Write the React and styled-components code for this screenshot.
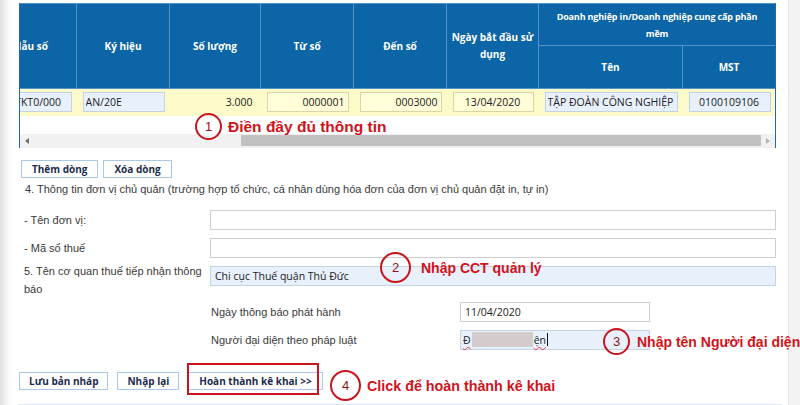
import React from 'react'
import styled, { createGlobalStyle, css } from 'styled-components'

const Global = createGlobalStyle`
  html, body { margin: 0; padding: 0; background: #fff; }
  body {
    width: 800px;
    height: 405px;
    overflow: hidden;
    font-family: "Liberation Sans", Arial, sans-serif;
  }
`

const Shell = styled.div`
  position: relative;
  display: flex;
  width: 800px;
  height: 405px;
  overflow: hidden;
`

const Page = styled.main`
  width: 788px;
  flex: none;
  box-sizing: border-box;
  padding: 3px 12px 0 19px;
  background: #fff;
  box-shadow: inset 14px 0 10px -10px rgba(0, 0, 0, 0.16);
`

const Gutter = styled.div`
  flex: 1;
  background: #f3f3f3;
  border-left: 1px solid #e6e6e6;
`

/* ---- invoice table ---- */

const ScrollBox = styled.div`
  border-left: 1px solid #1d6aa8;
  border-right: 1px solid #1d6aa8;
  overflow: hidden;
  background: #fff;
`

const Grid = styled.table`
  border-collapse: collapse;
  table-layout: fixed;
  width: 792px;
  margin-left: -37px;
`

const Col = styled.col`
  width: ${p => p.$w}px;
`

const HeadRow = styled.tr`
  height: ${p => p.$h}px;
`

const Th = styled.th`
  background: #0b65a6;
  color: #fff;
  border: 1px solid #5592c8;
  font: 700 10px/17px "Open Sans", sans-serif;
  text-align: center;
  padding: 0 4px;
  ${p => p.$tight && css`
    padding: 0 2px;
    font-size: 9px;
    letter-spacing: -0.15px;
    white-space: nowrap;
  `}
`

const DataRow = styled.tr`
  height: 27px;
  background: #fcfac9;
`

const Td = styled.td`
  padding: 0 5px 0 6px;
  text-align: ${p => p.$align || 'left'};
  font: 10.5px "Open Sans", sans-serif;
  color: #222;
  ${p => p.$plain && css`padding-right: 8px;`}
`

const tones = {
  blue: { bg: '#e8f0fb', border: '#c5d2e3' },
  yellow: { bg: '#fffed9', border: '#d9d6a6' },
  white: { bg: '#fff', border: '#cdcdcd' },
}

const fieldLook = css`
  display: block;
  width: 100%;
  height: 20px;
  box-sizing: border-box;
  margin: 0;
  border: 1px solid ${p => tones[p.$tone || 'white'].border};
  background: ${p => tones[p.$tone || 'white'].bg};
  font: 10.5px "Open Sans", sans-serif;
  color: #222;
  outline: none;
`

const CellInput = styled.input`
  ${fieldLook}
  padding: 0 3px 0 ${p => p.$indent ?? 2}px;
  text-align: ${p => p.$align || 'left'};
`

const Gap = styled.div`
  height: 18px;
`

const ScrollBar = styled.div`
  display: flex;
  align-items: center;
  height: 14px;
  background: #f1f1f1;
`

const Arrow = styled.span`
  width: 14px;
  height: 14px;
  display: flex;
  align-items: center;
  justify-content: center;
  flex: none;
  &::before {
    content: '';
    border-top: 3px solid transparent;
    border-bottom: 3px solid transparent;
    ${p => p.$dir === 'left'
      ? css`border-right: 4px solid #6d6d6d;`
      : css`border-left: 4px solid #b5b5b5;`}
  }
`

const Track = styled.div`
  flex: 1;
  display: flex;
  align-items: center;
  height: 100%;
`

const Thumb = styled.div`
  margin-left: auto;
  width: 520px;
  height: 11px;
  background: #c1c1c1;
`

/* ---- buttons ---- */

const ButtonRow = styled.div`
  display: flex;
  align-items: center;
  gap: ${p => p.$gap}px;
  margin: ${p => p.$margin};
`

const Btn = styled.button`
  height: 18px;
  box-sizing: border-box;
  padding: 0 ${p => p.$pad || 9}px;
  border: 1px solid #a9c9ea;
  background: #fff;
  font: 700 10px/16px "Open Sans", sans-serif;
  color: #1b2c4b;
  white-space: nowrap;
  cursor: pointer;
`

const Highlight = styled.span`
  position: relative;
  display: inline-flex;
  &::after {
    content: '';
    position: absolute;
    left: -1px;
    top: -9px;
    width: 132px;
    height: 32px;
    box-sizing: border-box;
    border: 2px solid #c8151d;
    pointer-events: none;
  }
`

/* ---- form ---- */

const SectionTitle = styled.p`
  margin: 3px 0 0 6px;
  font-size: 11px;
  line-height: 16px;
  color: #3a3a3a;
`

const Fields = styled.div`
  display: grid;
  grid-template-columns: 191px 1fr;
  row-gap: 8px;
  margin-top: 13px;
  align-items: center;
`

const Label = styled.label`
  padding-left: ${p => p.$indent ?? 5}px;
  font-size: 11px;
  line-height: 18px;
  color: #3a3a3a;
  ${p => p.$wrap && css`
    align-self: start;
    margin: -4px 0 -4px;
    width: 180px;
  `}
`

const Field = styled.input`
  ${fieldLook}
  padding: 0 4px;
  ${p => p.$top && css`align-self: start;`}
`

const SubFields = styled.div`
  grid-column: 2 / 3;
  display: grid;
  grid-template-columns: 250px 190px;
  row-gap: 8px;
  align-items: center;
`

const FakeField = styled.div`
  ${fieldLook}
  display: flex;
  align-items: center;
  padding: 0 2px;
`

const Typo = styled.span`
  text-decoration: underline wavy #e23a3a;
  text-decoration-thickness: 1px;
  text-underline-offset: 2px;
`

const Redact = styled.span`
  display: inline-block;
  width: 61px;
  height: 15px;
  margin: 0 1px 0 1px;
  background: #d4cccc;
`

const Caret = styled.span`
  display: inline-block;
  width: 1px;
  height: 13px;
  margin-left: 1px;
  background: #111;
`

const BottomBand = styled.div`
  margin: 14px -6px 0 -1px;
  height: 10px;
  background: #e9f1fb;
  border-top: 1px solid #dbe7f5;
`

/* ---- annotations ---- */

const Callout = styled.div`
  position: absolute;
  left: ${p => p.$x}px;
  top: ${p => p.$y}px;
  display: flex;
  align-items: center;
  gap: ${p => p.$gap}px;
  white-space: nowrap;
`

const Ring = styled.span`
  width: ${p => p.$size}px;
  height: ${p => p.$size}px;
  box-sizing: border-box;
  border: 2px solid #c8151d;
  border-radius: 50%;
  display: flex;
  align-items: center;
  justify-content: center;
  font: 13px "Liberation Sans", Arial, sans-serif;
  color: #8e1515;
`

const Note = styled.span`
  font: 700 ${p => p.$size}px "Liberation Sans", Arial, sans-serif;
  color: #d0131b;
`

const colWidths = [93, 93, 91, 93, 93, 92, 144, 93]

const callouts = [
  { n: 1, x: 195, y: 113, size: 27, gap: 6, font: 15.5, text: 'Điền đầy đủ thông tin' },
  { n: 2, x: 380, y: 252, size: 31, gap: 10, font: 14, text: 'Nhập CCT quản lý' },
  { n: 3, x: 603, y: 328, size: 27, gap: 7, font: 14, text: 'Nhập tên Người đại diện' },
  { n: 4, x: 330, y: 370, size: 31, gap: 6, font: 14.3, text: 'Click để hoàn thành kê khai' },
]

function InvoiceTable() {
  return (
    <ScrollBox>
      <Grid>
        <colgroup>
          {colWidths.map((w, i) => <Col key={i} $w={w} />)}
        </colgroup>
        <thead>
          <HeadRow $h={42}>
            <Th rowSpan={2}>Mẫu số</Th>
            <Th rowSpan={2}>Ký hiệu</Th>
            <Th rowSpan={2}>Số lượng</Th>
            <Th rowSpan={2}>Từ số</Th>
            <Th rowSpan={2}>Đến số</Th>
            <Th rowSpan={2}>Ngày bắt đầu sử dụng</Th>
            <Th colSpan={2} $tight>Doanh nghiệp in/Doanh nghiệp cung cấp phần<br />mềm</Th>
          </HeadRow>
          <HeadRow $h={43}>
            <Th>Tên</Th>
            <Th>MST</Th>
          </HeadRow>
        </thead>
        <tbody>
          <DataRow>
            <Td><CellInput $tone="blue" $indent={5} defaultValue="01GTKT0/000" readOnly /></Td>
            <Td><CellInput $tone="blue" defaultValue="AN/20E" readOnly /></Td>
            <Td $align="right" $plain>3.000</Td>
            <Td><CellInput $tone="yellow" $align="right" defaultValue="0000001" readOnly /></Td>
            <Td><CellInput $tone="yellow" $align="right" defaultValue="0003000" readOnly /></Td>
            <Td><CellInput $tone="yellow" $align="center" defaultValue="13/04/2020" readOnly /></Td>
            <Td><CellInput $tone="blue" defaultValue="TẬP ĐOÀN CÔNG NGHIỆP VIỄN THÔNG QUÂN ĐỘI" readOnly /></Td>
            <Td><CellInput $tone="blue" $align="center" defaultValue="0100109106" readOnly /></Td>
          </DataRow>
        </tbody>
      </Grid>
      <Gap />
      <ScrollBar>
        <Arrow $dir="left" />
        <Track><Thumb /></Track>
        <Arrow $dir="right" />
      </ScrollBar>
    </ScrollBox>
  )
}

export default function App() {
  return (
    <Shell>
      <Global />
      <Page>
        <InvoiceTable />

        <ButtonRow $gap={5} $margin="12px 0 0 2px">
          <Btn $pad={10}>Thêm dòng</Btn>
          <Btn $pad={10}>Xóa dòng</Btn>
        </ButtonRow>

        <SectionTitle>
          4. Thông tin đơn vị chủ quản (trường hợp tổ chức, cá nhân dùng hóa đơn của đơn vị chủ quản đặt in, tự in)
        </SectionTitle>

        <Fields>
          <Label>- Tên đơn vị:</Label>
          <Field readOnly />
          <Label>- Mã số thuế</Label>
          <Field readOnly />
          <Label $wrap>5. Tên cơ quan thuế tiếp nhận thông báo</Label>
          <Field $top $tone="blue" defaultValue="Chi cục Thuế quận Thủ Đức" readOnly />
          <SubFields>
            <Label $indent={1}>Ngày thông báo phát hành</Label>
            <Field defaultValue="11/04/2020" readOnly />
            <Label $indent={1}>Người đại diện theo pháp luật</Label>
            <FakeField $tone="blue">
              <Typo>Đ</Typo>
              <Redact />
              <Typo>ện</Typo>
              <Caret />
            </FakeField>
          </SubFields>
        </Fields>

        <ButtonRow $gap={9} $margin="22px 0 0 0">
          <Btn>Lưu bản nháp</Btn>
          <Btn>Nhập lại</Btn>
          <Highlight>
            <Btn $pad={10}>Hoàn thành kê khai &gt;&gt;</Btn>
          </Highlight>
        </ButtonRow>

        <BottomBand />
      </Page>
      <Gutter />

      {callouts.map(c => (
        <Callout key={c.n} $x={c.x} $y={c.y} $gap={c.gap}>
          <Ring $size={c.size}>{c.n}</Ring>
          <Note $size={c.font}>{c.text}</Note>
        </Callout>
      ))}
    </Shell>
  )
}
